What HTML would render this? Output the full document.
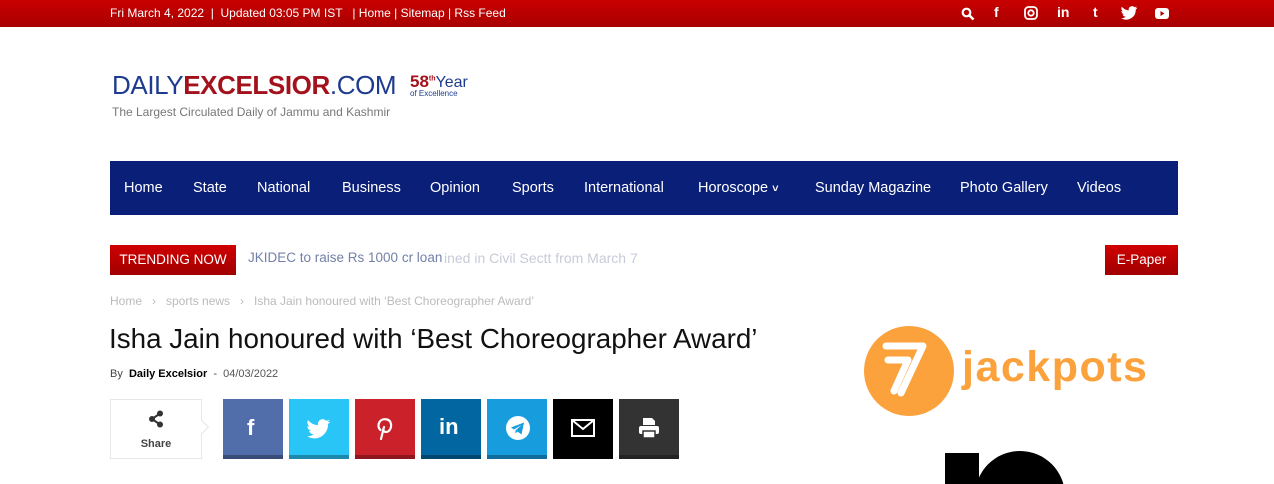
<!DOCTYPE html>
<html><head><meta charset="utf-8"><style>
*{margin:0;padding:0;box-sizing:border-box}
html,body{width:1274px;height:484px;overflow:hidden}
body{background:#fff;font-family:"Liberation Sans",sans-serif;position:relative}
.top{position:absolute;left:0;top:0;width:1274px;height:27px;background:linear-gradient(#c90000,#a80000);color:#fff;font-size:12px}
.top .l{position:absolute;left:110px;top:6px;white-space:pre}
.top .ic{position:absolute;top:5px;color:#fff;font-weight:bold;font-size:14px}
.nav{position:absolute;left:110px;top:161px;width:1068px;height:54px;background:#0a1f78;color:#fff;font-size:14.5px}
.nav span{position:absolute;top:19px}
.tr{position:absolute;left:110px;top:245px;width:126px;height:30px;background:linear-gradient(#d00000,#a00000);color:#fff;font-size:13.5px;text-align:center;line-height:30px}
.ep{position:absolute;left:1105px;top:245px;width:73px;height:30px;background:linear-gradient(#d00000,#a00000);color:#fff;font-size:13.5px;text-align:center;line-height:30px}
.btn{position:absolute;top:399px;width:60px;height:60px;border-bottom:4px solid rgba(0,0,0,.3)}
</style></head><body>
<div class="top"><div class="l">Fri March 4, 2022  |  Updated 03:05 PM IST   | Home | Sitemap | Rss Feed</div>
<svg class="ic" style="left:961px;top:7px" width="14" height="14" viewBox="0 0 14 14"><circle cx="5.5" cy="5.5" r="3.8" fill="none" stroke="#fff" stroke-width="2.2"/><path d="M8.5 8.5L12.5 12.5" stroke="#fff" stroke-width="2.6"/></svg>
<span class="ic" style="left:994px;top:4px">f</span>
<svg class="ic" style="left:1024px;top:6px" width="14" height="14" viewBox="0 0 14 14"><rect x="1" y="1" width="12" height="12" rx="3.5" fill="none" stroke="#fff" stroke-width="1.8"/><circle cx="7" cy="7" r="2.7" fill="none" stroke="#fff" stroke-width="1.8"/></svg>
<span class="ic" style="left:1057px;top:4px">in</span>
<span class="ic" style="left:1093px;top:4px">t</span>
<svg class="ic" style="left:1121px;top:6px" width="17" height="14" viewBox="0 0 24 20"><path d="M23 2.5c-.9.4-1.8.6-2.8.8 1-.6 1.8-1.6 2.1-2.7-1 .6-2 1-3.1 1.2A4.8 4.8 0 0 0 11 6.2 13.7 13.7 0 0 1 1.1 1.1a4.8 4.8 0 0 0 1.5 6.5c-.8 0-1.5-.2-2.2-.6 0 2.4 1.7 4.4 3.9 4.8-.7.2-1.5.2-2.2.1.6 2 2.4 3.3 4.5 3.4A9.7 9.7 0 0 1 0 17.3 13.7 13.7 0 0 0 21 5.7V5c1-.7 1.7-1.5 2.3-2.5z" fill="#fff"/></svg>
<svg class="ic" style="left:1155px;top:8px" width="14" height="11" viewBox="0 0 14 11"><rect width="14" height="11" rx="3" fill="#fff"/><path d="M5.5 3v5l4-2.5z" fill="#b00000"/></svg>
</div>
<div style="position:absolute;left:112px;top:70px;font-size:26px;letter-spacing:-0.4px;color:#1d3b8f;line-height:30px">DAILY<span style="color:#a3121c;font-weight:bold">EXCELSIOR</span>.COM</div>
<div style="position:absolute;left:410px;top:72px;font-size:17px;font-weight:bold;color:#a3121c">58<sup style="font-size:7px">th</sup><span style="font-weight:normal;color:#1d3b8f;font-size:16px">Year</span></div>
<div style="position:absolute;left:410px;top:89px;font-size:8px;color:#1d3b8f">of Excellence</div>
<div style="position:absolute;left:112px;top:105px;font-size:12px;color:#777">The Largest Circulated Daily of Jammu and Kashmir</div>
<div class="nav"><span style="left:14px">Home</span><span style="left:83px">State</span><span style="left:147px">National</span><span style="left:232px">Business</span><span style="left:320px">Opinion</span><span style="left:402px">Sports</span><span style="left:474px">International</span><span style="left:588px">Horoscope <b style="font-size:11px">&#x2C5;</b></span><span style="left:705px">Sunday Magazine</span><span style="left:850px">Photo Gallery</span><span style="left:967px">Videos</span></div>
<div class="tr">TRENDING NOW</div>
<div style="position:absolute;left:444px;top:250px;font-size:14px;color:#c8cbd8;white-space:nowrap">ined in Civil Sectt from March 7</div>
<div style="position:absolute;left:248px;top:250px;font-size:13.5px;color:#7380a8;white-space:nowrap">JKIDEC to raise Rs 1000 cr loan</div>
<div class="ep">E-Paper</div>
<div style="position:absolute;left:110px;top:294px;font-size:12px;color:#bbb;white-space:pre">Home   ›   sports news   ›   Isha Jain honoured with ‘Best Choreographer Award’</div>
<div style="position:absolute;left:109px;top:323px;font-size:27.8px;color:#111;white-space:nowrap">Isha Jain honoured with ‘Best Choreographer Award’</div>
<div style="position:absolute;left:110px;top:368px;font-size:11px;color:#444">By <b style="color:#000">&nbsp;Daily Excelsior</b> &nbsp;- &nbsp;<span style="color:#555">04/03/2022</span></div>
<div style="position:absolute;left:110px;top:399px;width:92px;height:60px;border:1px solid #e6e6e6;text-align:center">
<svg style="margin-top:10px" width="16" height="18" viewBox="0 0 16 18"><circle cx="12" cy="3.5" r="3" fill="#333"/><circle cx="4" cy="9" r="3" fill="#333"/><circle cx="12" cy="14.5" r="3" fill="#333"/><path d="M12 3.5L4 9L12 14.5" stroke="#333" stroke-width="2" fill="none"/></svg>
<div style="font-size:11px;font-weight:bold;color:#444;margin-top:5px">Share</div></div>
<div style="position:absolute;left:197px;top:422px;width:10px;height:10px;background:#fff;border-right:1px solid #e6e6e6;border-top:1px solid #e6e6e6;transform:rotate(45deg)"></div>
<div class="btn" style="left:223px;background:#516eab"><span style="position:absolute;left:24px;top:16px;color:#fff;font-weight:bold;font-size:22px">f</span></div>
<div class="btn" style="left:289px;background:#29c5f6"><svg style="position:absolute;left:18px;top:20px" width="24" height="20" viewBox="0 0 24 20"><path d="M23 2.5c-.9.4-1.8.6-2.8.8 1-.6 1.8-1.6 2.1-2.7-1 .6-2 1-3.1 1.2A4.8 4.8 0 0 0 11 6.2 13.7 13.7 0 0 1 1.1 1.1a4.8 4.8 0 0 0 1.5 6.5c-.8 0-1.5-.2-2.2-.6 0 2.4 1.7 4.4 3.9 4.8-.7.2-1.5.2-2.2.1.6 2 2.4 3.3 4.5 3.4A9.7 9.7 0 0 1 0 17.3 13.7 13.7 0 0 0 21 5.7V5c1-.7 1.7-1.5 2.3-2.5z" fill="#fff"/></svg></div>
<div class="btn" style="left:355px;background:#ca212a"><svg style="position:absolute;left:21px;top:17px" width="18" height="24" viewBox="0 0 18 24"><path d="M5 23l3-12M4.5 14C2 12 2 8.5 3.5 6 6 2 14 2 15 8c.7 4.5-2 8-5 8-2 0-3-1.5-2.5-3.5" stroke="#fff" stroke-width="2.2" fill="none" stroke-linecap="round"/></svg></div>
<div class="btn" style="left:421px;background:#0266a0"><span style="position:absolute;left:18px;top:15px;color:#fff;font-weight:bold;font-size:22px">in</span></div>
<div class="btn" style="left:487px;background:#179cde"><svg style="position:absolute;left:19px;top:17px" width="24" height="24" viewBox="0 0 24 24"><circle cx="12" cy="12" r="12" fill="#fff"/><path d="M5 11.5l13-5-2.5 12-4-3-2 2v-3l6-5.5-7.5 4.5z" fill="#179cde"/></svg></div>
<div class="btn" style="left:553px;background:#000"><svg style="position:absolute;left:18px;top:20px" width="24" height="18" viewBox="0 0 24 18"><rect x="1" y="1" width="22" height="16" fill="none" stroke="#fff" stroke-width="2"/><path d="M1 1l11 9 11-9" stroke="#fff" stroke-width="2" fill="none"/></svg></div>
<div class="btn" style="left:619px;background:#333"><svg style="position:absolute;left:19px;top:18px" width="22" height="22" viewBox="0 0 22 22"><path d="M5 1h9l3 3v4H5z" fill="#fff"/><rect x="1" y="9" width="20" height="8" rx="2" fill="#fff"/><rect x="5" y="14" width="12" height="7" fill="#fff" stroke="#333" stroke-width="1.5"/></svg></div>
<svg style="position:absolute;left:864px;top:326px" width="90" height="90" viewBox="0 0 90 90"><circle cx="45" cy="45" r="45" fill="#fba23d"/><path d="M22 20h37l-22 47M24 34h20l-14 31" stroke="#fff" stroke-width="7" fill="none" stroke-linecap="round" stroke-linejoin="round"/></svg>
<div style="position:absolute;left:962px;top:343px;font-size:43px;font-weight:bold;color:#fba23d;letter-spacing:1.5px">jackpots</div>
<svg style="position:absolute;left:940px;top:448px" width="130" height="36" viewBox="0 0 130 36"><rect x="5" y="5" width="34" height="40" fill="#000"/><circle cx="80" cy="48" r="45" fill="#000"/></svg>
</body></html>
